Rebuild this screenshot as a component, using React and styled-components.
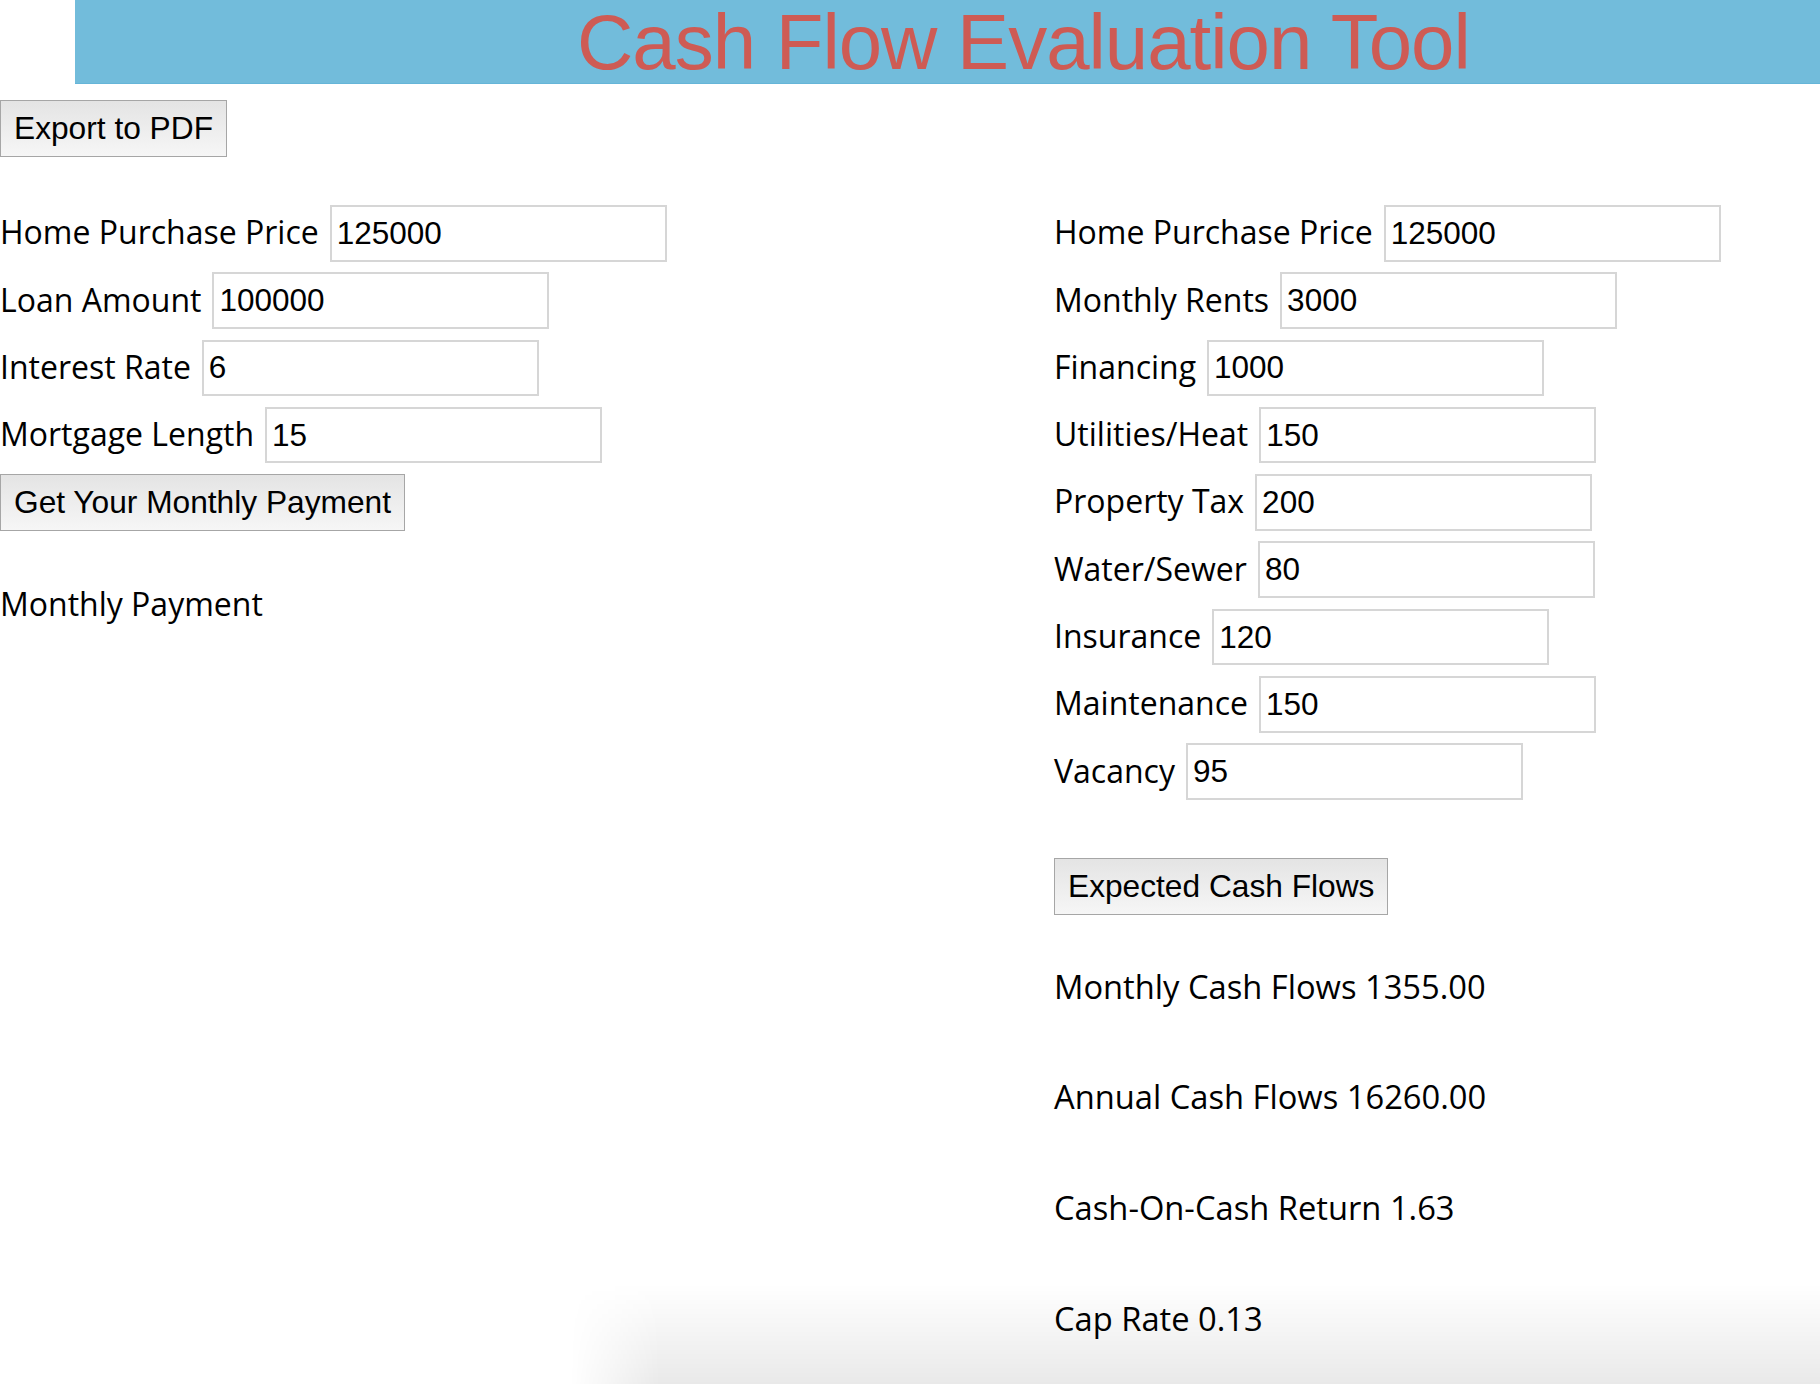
import React, { useState } from 'react';
import styled, { createGlobalStyle } from 'styled-components';

const GlobalStyle = createGlobalStyle`
  html, body {
    margin: 0;
    padding: 0;
    background: #fff;
    overflow: hidden;
  }
  body {
    font-family: "Open Sans", "Liberation Sans", sans-serif;
    color: #000;
  }
`;

const Page = styled.div`
  width: 1820px;
  min-height: 1384px;
`;

const Header = styled.header`
  box-sizing: border-box;
  margin-left: 75px;
  height: 84px;
  padding-top: 2px;
  background: #72bcdb;
  border-bottom: 1px solid #65b5d8;
`;

const Title = styled.h1`
  margin: 0;
  padding-left: 502px;
  font-family: "Liberation Sans", Arial, sans-serif;
  font-weight: 400;
  font-size: 78px;
  line-height: 81px;
  letter-spacing: -1px;
  color: #ce5b54;
  white-space: nowrap;
`;

const Toolbar = styled.div`
  margin-top: 16px;
  display: flex;
`;

const Button = styled.button`
  height: 57px;
  padding: 0 13px;
  font-family: "Liberation Sans", Arial, sans-serif;
  font-size: 31.7px;
  color: #000;
  background: linear-gradient(#e4e4e4, #f6f6f6);
  border: 1px solid #a6a6a6;
  border-radius: 0;
  cursor: pointer;
  white-space: nowrap;
`;

const Columns = styled.div`
  margin-top: 48px;
  display: grid;
  grid-template-columns: 1054px 1fr;
`;

const Column = styled.div`
  display: flex;
  flex-direction: column;
  align-items: flex-start;
`;

const Fields = styled.div`
  display: flex;
  flex-direction: column;
  gap: 10.8px;
  align-items: flex-start;
`;

const Row = styled.label`
  display: flex;
  align-items: center;
  gap: 11px;
`;

const Label = styled.span`
  padding-bottom: 2px;
  font-size: 32px;
  line-height: 1;
  white-space: nowrap;
`;

const Input = styled.input`
  box-sizing: border-box;
  width: 337px;
  height: 56.5px;
  padding: 0 5px;
  font-family: "Liberation Sans", Arial, sans-serif;
  font-size: 31.5px;
  color: #000;
  background: #fff;
  border: 2px solid #d6d6d6;
  border-radius: 0;
  outline: none;
`;

const PaymentText = styled.p`
  margin: 51px 0 0;
  font-size: 32px;
  line-height: 43px;
`;

const ActionWrap = styled.div`
  margin-top: ${p => p.$gap}px;
`;

const Results = styled.div`
  margin-top: 50px;
  display: flex;
  flex-direction: column;
  gap: 67px;
`;

const Result = styled.p`
  margin: 0;
  font-size: 32.7px;
  line-height: 43.6px;
  white-space: nowrap;
`;

const BottomShade = styled.div`
  position: fixed;
  left: 570px;
  right: 0;
  bottom: 0;
  height: 100px;
  pointer-events: none;
  background: linear-gradient(180deg, rgba(0, 0, 0, 0) 0%, rgba(0, 0, 0, 0.085) 100%);
  -webkit-mask-image: linear-gradient(90deg, transparent 0, #000 90px);
  mask-image: linear-gradient(90deg, transparent 0, #000 90px);
`;

const mortgageFields = [
  { label: 'Home Purchase Price', value: '125000' },
  { label: 'Loan Amount', value: '100000' },
  { label: 'Interest Rate', value: '6' },
  { label: 'Mortgage Length', value: '15' },
];

const cashFields = [
  { label: 'Home Purchase Price', value: '125000' },
  { label: 'Monthly Rents', value: '3000' },
  { label: 'Financing', value: '1000' },
  { label: 'Utilities/Heat', value: '150' },
  { label: 'Property Tax', value: '200' },
  { label: 'Water/Sewer', value: '80' },
  { label: 'Insurance', value: '120' },
  { label: 'Maintenance', value: '150' },
  { label: 'Vacancy', value: '95' },
];

function Field({ label, value }) {
  const [val, setVal] = useState(value);
  return (
    <Row>
      <Label>{label}</Label>
      <Input type="text" value={val} onChange={e => setVal(e.target.value)} />
    </Row>
  );
}

export default function App() {
  return (
    <Page>
      <GlobalStyle />
      <Header>
        <Title>Cash Flow Evaluation Tool</Title>
      </Header>
      <Toolbar>
        <Button>Export to PDF</Button>
      </Toolbar>
      <Columns>
        <Column>
          <Fields>
            {mortgageFields.map(f => (
              <Field key={f.label} {...f} />
            ))}
            <Button>Get Your Monthly Payment</Button>
          </Fields>
          <PaymentText>Monthly Payment</PaymentText>
        </Column>
        <Column>
          <Fields>
            {cashFields.map(f => (
              <Field key={f.label} {...f} />
            ))}
          </Fields>
          <ActionWrap $gap={58}>
            <Button>Expected Cash Flows</Button>
          </ActionWrap>
          <Results>
            <Result>Monthly Cash Flows 1355.00</Result>
            <Result>Annual Cash Flows 16260.00</Result>
            <Result>Cash-On-Cash Return 1.63</Result>
            <Result>Cap Rate 0.13</Result>
          </Results>
        </Column>
      </Columns>
      <BottomShade />
    </Page>
  );
}
